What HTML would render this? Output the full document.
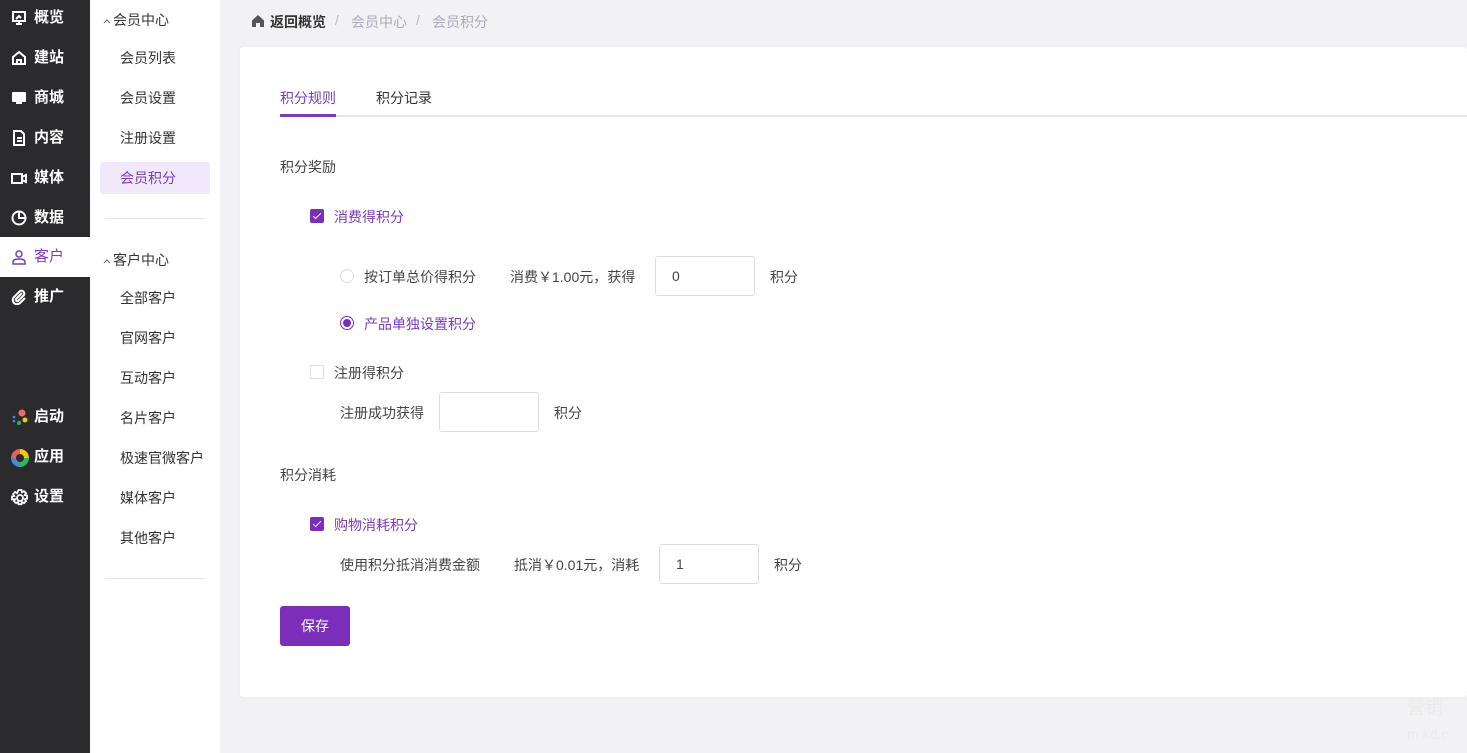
<!DOCTYPE html>
<html><head><meta charset="utf-8"><style>
*{margin:0;padding:0;box-sizing:border-box}
body{width:1467px;height:753px;overflow:hidden;background:#f2f2f4;font-family:"Liberation Sans","Noto Sans CJK SC",sans-serif;font-size:14px;color:#333;position:relative}
.a{position:absolute}
#nav{left:0;top:0;width:90px;height:753px;background:#2b2b2e}
.ni{position:absolute;left:0;width:90px;height:40px;color:#fff;font-size:15px;font-weight:bold;line-height:36px;padding-left:34px}
.ni svg{position:absolute;left:11px;top:10px}
.ni.on{background:#fff;color:#7b3bb6;font-weight:normal}
#sub{left:90px;top:0;width:130px;height:753px;background:#fff}
.sh{position:absolute;left:12px;font-size:14px;color:#333}
.sh svg{vertical-align:middle;margin-right:1px}
.si{position:absolute;left:10px;width:110px;height:32px;line-height:32px;padding-left:20px;font-size:14px;color:#333}
.si.on{background:#f1e9fb;color:#7b3bb6;border-radius:3px}
.hr{position:absolute;left:15px;width:100px;height:1px;background:#e8e8ec}
#card{left:240px;top:47px;width:1227px;height:650px;background:#fff;border-radius:3px;box-shadow:0 0 4px rgba(0,0,0,.05)}
.t{position:absolute;white-space:nowrap;font-size:14px;color:#444}
.p{color:#7b3bb6}
.cb{position:absolute;width:14px;height:14px;border:1px solid #ddd;border-radius:2px;background:#fff}
.cb.on{background:#7b2fb8;border-color:#7b2fb8}
.cb.on:after{content:"";position:absolute;left:4px;top:1px;width:3px;height:7px;border:solid #fff;border-width:0 1.5px 1.5px 0;transform:rotate(45deg)}
.rd{position:absolute;width:14px;height:14px;border:1px solid #ddd;border-radius:50%}
.rd.on{border-color:#7b2fb8}
.rd.on:after{content:"";position:absolute;left:2px;top:2px;width:8px;height:8px;border-radius:50%;background:#7b2fb8}
.in{position:absolute;height:40px;border:1px solid #ddd;border-radius:3px;padding-left:16px;line-height:38px;font-size:14px;color:#444}
</style></head><body>
<div id="nav" class="a">
<div class="ni" style="top:0"><svg width="16" height="16" viewBox="0 0 16 16" fill="none" stroke="#fff" stroke-width="2"><rect x="2" y="2" width="12" height="9"/><path d="M5 9l3-3 2 2M8 11v3M5 14h6"/></svg>概览</div>
<div class="ni" style="top:40px"><svg width="16" height="16" viewBox="0 0 16 16" fill="none" stroke="#fff" stroke-width="2"><path d="M2 7l6-5 6 5v7H2z M6 14v-4h4v4"/></svg>建站</div>
<div class="ni" style="top:80px"><svg width="16" height="16" viewBox="0 0 16 16"><rect x="1" y="2" width="14" height="10" rx="1" fill="#fff"/><rect x="5" y="12" width="6" height="2" fill="#fff"/></svg>商城</div>
<div class="ni" style="top:120px"><svg width="16" height="16" viewBox="0 0 16 16" fill="none" stroke="#fff" stroke-width="2"><path d="M3 1h7l3 3v11H3z M6 8h5M6 11h5"/></svg>内容</div>
<div class="ni" style="top:160px"><svg width="16" height="16" viewBox="0 0 16 16" fill="none" stroke="#fff" stroke-width="2"><rect x="1" y="4" width="10" height="9"/><path d="M11 7l4-2v7l-4-2"/></svg>媒体</div>
<div class="ni" style="top:200px"><svg width="16" height="16" viewBox="0 0 16 16" fill="none" stroke="#fff" stroke-width="2"><circle cx="8" cy="8" r="6.5"/><path d="M8 2v6h6"/></svg>数据</div>
<div class="ni on" style="top:237px;line-height:40px"><svg width="16" height="16" viewBox="0 0 16 16" fill="none" stroke="#7b3bb6" stroke-width="1.5" style="top:12px"><circle cx="8" cy="5" r="3"/><path d="M2 15v-2c0-2 2-3 6-3s6 1 6 3v2z"/></svg>客户</div>
<div class="ni" style="top:279px"><svg width="16" height="16" viewBox="0 0 16 16" fill="none" stroke="#fff" stroke-width="2"><path d="M11 4l-6 6a1.5 1.5 0 0 0 2 2l6-6a3 3 0 0 0-4-4L3 8a4 4 0 0 0 6 6l5-5"/></svg>推广</div>
<div class="ni" style="top:399px"><svg width="18" height="18" viewBox="0 0 18 18"><circle cx="11" cy="4" r="3.5" fill="#f26b6b"/><circle cx="14" cy="11" r="2.5" fill="#f5c518"/><circle cx="8" cy="14" r="2" fill="#2fb65a"/><circle cx="3" cy="8" r="1.3" fill="#4a8ad8"/><circle cx="3" cy="12" r="1.3" fill="#4a8ad8"/></svg>启动</div>
<div class="ni" style="top:439px"><svg width="18" height="18" viewBox="0 0 18 18"><path d="M9 0A9 9 0 0 0 0 9h5a4 4 0 0 1 4-4z" fill="#ef5b5b"/><path d="M9 0a9 9 0 0 1 9 9h-5a4 4 0 0 0-4-4z" fill="#f5c518"/><path d="M18 9a9 9 0 0 1-9 9v-5a4 4 0 0 0 4-4z" fill="#2fb65a"/><path d="M9 18a9 9 0 0 1-9-9h5a4 4 0 0 0 4 4z" fill="#4a8ad8"/></svg>应用</div>
<div class="ni" style="top:479px"><svg width="18" height="18" viewBox="0 0 18 18" fill="none" stroke="#fff" stroke-width="1.8"><circle cx="9" cy="9" r="3"/><path d="M7.5 1h3l.5 2.3 2-1.2 2 2-1.2 2 2.3.5v3l-2.3.5 1.2 2-2 2-2-1.2-.5 2.3h-3l-.5-2.3-2 1.2-2-2 1.2-2L1 10.5v-3l2.3-.5-1.2-2 2-2 2 1.2z"/></svg>设置</div>
</div>
<div id="sub" class="a">
<div class="sh" style="top:10px"><svg width="10" height="10" viewBox="0 0 10 10"><path d="M2 7l3-3 3 3" fill="none" stroke="#666" stroke-width="1"/></svg>会员中心</div>
<div class="si" style="top:42px">会员列表</div>
<div class="si" style="top:82px">会员设置</div>
<div class="si" style="top:122px">注册设置</div>
<div class="si on" style="top:162px">会员积分</div>
<div class="hr" style="top:218px"></div>
<div class="sh" style="top:250px"><svg width="10" height="10" viewBox="0 0 10 10"><path d="M2 7l3-3 3 3" fill="none" stroke="#666" stroke-width="1"/></svg>客户中心</div>
<div class="si" style="top:282px">全部客户</div>
<div class="si" style="top:322px">官网客户</div>
<div class="si" style="top:362px">互动客户</div>
<div class="si" style="top:402px">名片客户</div>
<div class="si" style="top:442px">极速官微客户</div>
<div class="si" style="top:482px">媒体客户</div>
<div class="si" style="top:522px">其他客户</div>
<div class="hr" style="top:578px"></div>
</div>
<svg class="a" style="left:251px;top:14px" width="14" height="14" viewBox="0 0 14 14"><path d="M7 1L1 6.5V13h4V9h4v4h4V6.5z" fill="#555"/></svg>
<div class="t" style="left:270px;top:12px;font-weight:bold;color:#333">返回概览</div>
<div class="t" style="left:335px;top:12px;color:#bbb">/</div>
<div class="t" style="left:351px;top:12px;color:#aab">会员中心</div>
<div class="t" style="left:416px;top:12px;color:#bbb">/</div>
<div class="t" style="left:432px;top:12px;color:#aab">会员积分</div>
<div id="card" class="a"></div>
<div class="a" style="left:280px;top:115px;width:1187px;height:2px;background:#e6e6ea"></div>
<div class="a" style="left:280px;top:114px;width:56px;height:3px;background:#7b3bb6"></div>
<div class="t p" style="left:280px;top:88px">积分规则</div>
<div class="t" style="left:376px;top:88px;color:#333">积分记录</div>
<div class="t" style="left:280px;top:157px">积分奖励</div>
<div class="cb on" style="left:310px;top:209px"></div>
<div class="t p" style="left:334px;top:207px">消费得积分</div>
<div class="rd" style="left:340px;top:269px"></div>
<div class="t" style="left:364px;top:267px">按订单总价得积分</div>
<div class="t" style="left:510px;top:267px">消费￥1.00元，获得</div>
<div class="in" style="left:655px;top:256px;width:100px">0</div>
<div class="t" style="left:770px;top:267px">积分</div>
<div class="rd on" style="left:340px;top:316px"></div>
<div class="t p" style="left:364px;top:314px">产品单独设置积分</div>
<div class="cb" style="left:310px;top:365px"></div>
<div class="t" style="left:334px;top:363px">注册得积分</div>
<div class="t" style="left:340px;top:403px">注册成功获得</div>
<div class="in" style="left:439px;top:392px;width:100px"></div>
<div class="t" style="left:554px;top:403px">积分</div>
<div class="t" style="left:280px;top:465px">积分消耗</div>
<div class="cb on" style="left:310px;top:517px"></div>
<div class="t p" style="left:334px;top:515px">购物消耗积分</div>
<div class="t" style="left:340px;top:555px">使用积分抵消消费金额</div>
<div class="t" style="left:514px;top:555px">抵消￥0.01元，消耗</div>
<div class="in" style="left:659px;top:544px;width:100px">1</div>
<div class="t" style="left:774px;top:555px">积分</div>
<div class="a" style="left:280px;top:606px;width:70px;height:40px;background:#7b2fb8;border-radius:3px;color:#fff;text-align:center;line-height:40px;font-size:14px">保存</div>
<div class="t" style="left:1407px;top:694px;font-size:18px;color:#eaeaea">营销</div>
<div class="t" style="left:1407px;top:726px;font-size:14px;color:#eaeaea">m.kd.c</div>
</body></html>
